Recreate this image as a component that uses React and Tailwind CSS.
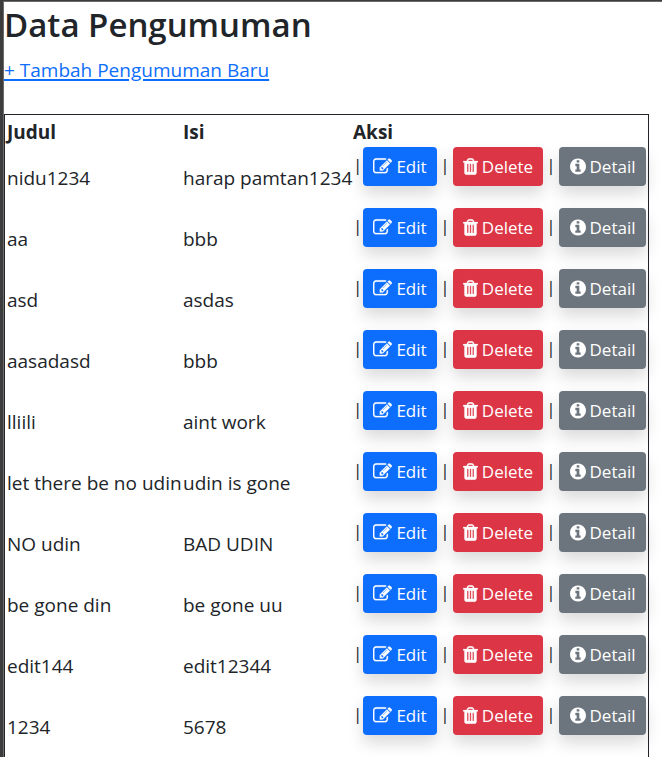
import React from "react";

const announcements = [
  { judul: "nidu1234", isi: "harap pamtan1234" },
  { judul: "aa", isi: "bbb" },
  { judul: "asd", isi: "asdas" },
  { judul: "aasadasd", isi: "bbb" },
  { judul: "lliili", isi: "aint work" },
  { judul: "let there be no udin", isi: "udin is gone" },
  { judul: "NO udin", isi: "BAD UDIN" },
  { judul: "be gone din", isi: "be gone uu" },
  { judul: "edit144", isi: "edit12344" },
  { judul: "1234", isi: "5678" },
];

function EditIcon() {
  return (
    <svg viewBox="0 0 1792 1792" className="h-[19px] w-[19px] shrink-0" fill="currentColor" stroke="currentColor" strokeWidth="20" aria-hidden="true">
      <path d="M888 1184l116-116-152-152-116 116v56h96v96h56zm440-720q-16-16-33 1l-350 350q-17 17-1 33t33-1l350-350q17-17 1-33zm80 594v190q0 119-84.5 203.5t-203.5 84.5h-832q-119 0-203.5-84.5t-84.5-203.5v-832q0-119 84.5-203.5t203.5-84.5h832q63 0 117 25 15 7 18 23 3 17-9 29l-49 49q-14 14-32 8-23-6-45-6h-832q-66 0-113 47t-47 113v832q0 66 47 113t113 47h832q66 0 113-47t47-113v-126q0-13 9-22l64-64q15-15 35-7t20 29zm-96-738l288 288-672 672h-288v-288zm444 132l-92 92-288-288 92-92q28-28 68-28t68 28l152 152q28 28 28 68t-28 68z" />
    </svg>
  );
}

function TrashIcon() {
  return (
    <svg viewBox="192 0 1408 1792" className="h-[19px] w-[15px] shrink-0" fill="currentColor" stroke="currentColor" strokeWidth="20" aria-hidden="true">
      <path d="M704 1376v-704q0-14-9-23t-23-9h-64q-14 0-23 9t-9 23v704q0 14 9 23t23 9h64q14 0 23-9t9-23zm256 0v-704q0-14-9-23t-23-9h-64q-14 0-23 9t-9 23v704q0 14 9 23t23 9h64q14 0 23-9t9-23zm256 0v-704q0-14-9-23t-23-9h-64q-14 0-23 9t-9 23v704q0 14 9 23t23 9h64q14 0 23-9t9-23zm-544-992h448l-48-117q-7-9-17-11h-317q-10 2-17 11zm928 32v64q0 14-9 23t-23 9h-96v948q0 83-47 143.5t-113 60.5h-832q-66 0-113-58.5t-47-141.5v-952h-96q-14 0-23-9t-9-23v-64q0-14 9-23t23-9h309l70-167q15-37 54-63t79-26h320q40 0 79 26t54 63l70 167h309q14 0 23 9t9 23z" />
    </svg>
  );
}

function InfoIcon() {
  return (
    <svg viewBox="128 0 1536 1792" className="h-[19px] w-4 shrink-0" fill="currentColor" aria-hidden="true">
      <path d="M1152 1376v-160q0-14-9-23t-23-9h-96v-512q0-14-9-23t-23-9h-320q-14 0-23 9t-9 23v160q0 14 9 23t23 9h96v320h-96q-14 0-23 9t-9 23v160q0 14 9 23t23 9h448q14 0 23-9t9-23zm-128-896v-160q0-14-9-23t-23-9h-192q-14 0-23 9t-9 23v160q0 14 9 23t23 9h192q14 0 23-9t9-23zm640 416q0 209-103 385.5t-279.5 279.5-385.5 103-385.5-103-279.5-279.5-103-385.5 103-385.5 279.5-279.5 385.5-103 385.5 103 279.5 279.5 103 385.5z" />
    </svg>
  );
}

const buttonBase =
  "flex h-[39px] items-center justify-center gap-1 rounded-[4px] text-[17px] leading-6 text-white shadow-[0_8px_16px_rgba(0,0,0,0.15)]";

function Separator({ className }) {
  return <span className={`text-[17px] leading-9 ${className}`}>|</span>;
}

function Row({ judul, isi }) {
  return (
    <tr className="h-[61px]">
      <td className="pl-0.5">{judul}</td>
      <td className="pl-0.5">{isi}</td>
      <td className="pr-0.5 align-top">
        <div className="flex justify-end">
          <Separator className="w-2.5" />
          <button type="button" className={`${buttonBase} w-[74px] bg-[#0d6efd]`}>
            <EditIcon />
            Edit
          </button>
          <Separator className="w-4 text-center" />
          <button type="button" className={`${buttonBase} w-[90px] bg-[#dc3545]`}>
            <TrashIcon />
            Delete
          </button>
          <Separator className="w-4 text-center" />
          <button type="button" className={`${buttonBase} w-[87px] bg-[#6c757d]`}>
            <InfoIcon />
            Detail
          </button>
        </div>
      </td>
    </tr>
  );
}

export default function App() {
  return (
    <div className="h-screen overflow-hidden border-t border-l-[3px] border-[#3c3c3c] bg-white font-['Open_Sans',sans-serif] text-[#212529]">
      <div className="border-t border-l border-[#6b6b6b]">
        <h1 className="text-[33px] leading-[46px] font-semibold">Data Pengumuman</h1>
        <a href="#tambah" className="mt-1.5 inline-block text-[19px] leading-8 text-[#0d6efd] underline decoration-2 underline-offset-2">
          + Tambah Pengumuman Baru
        </a>
        <table className="mt-7 w-[645px] table-fixed border-separate border-spacing-0 border border-[#212529] text-[19px] leading-[30px] whitespace-nowrap">
          <thead>
            <tr className="text-left">
              <th scope="col" className="w-[176px] pt-0.5 pl-0.5 font-bold">Judul</th>
              <th scope="col" className="w-[170px] pt-0.5 pl-0.5 font-bold">Isi</th>
              <th scope="col" className="pt-0.5 pl-0.5 font-bold">Aksi</th>
            </tr>
          </thead>
          <tbody>
            {announcements.map((item) => (
              <Row key={item.judul} {...item} />
            ))}
          </tbody>
        </table>
      </div>
    </div>
  );
}
